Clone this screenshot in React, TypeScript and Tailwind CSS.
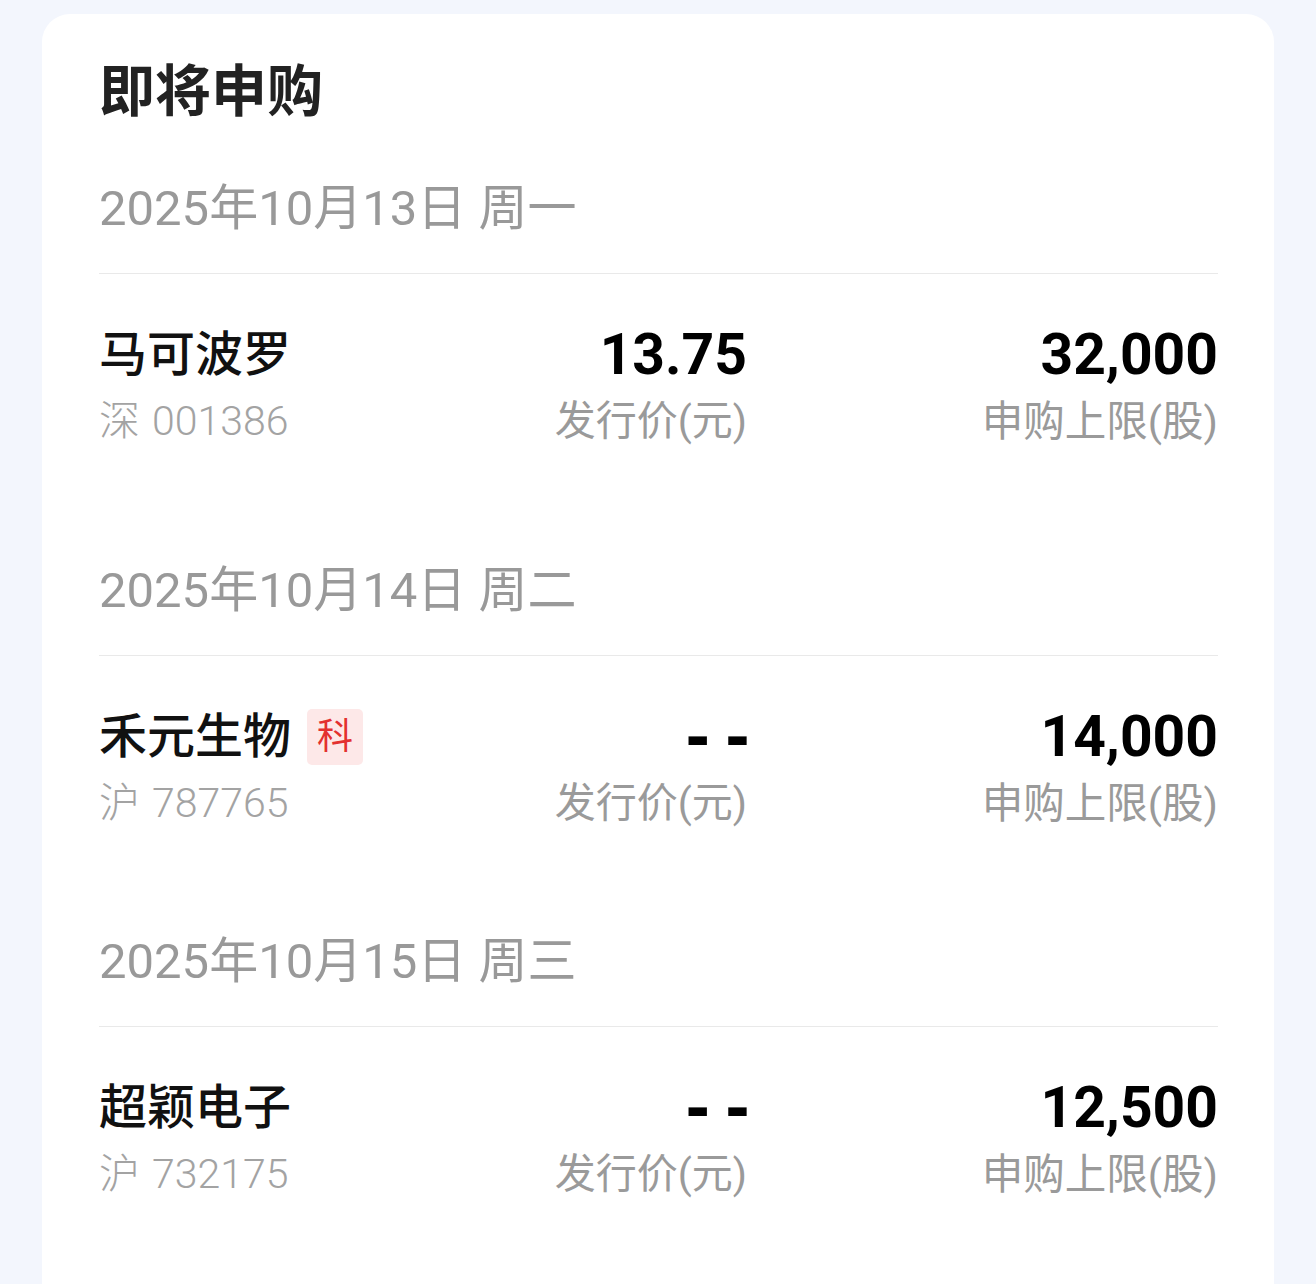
const font = { fontFamily: 'Roboto, "Noto Sans CJK SC", sans-serif' };

type Item = {
  name: string;
  market: string;
  code: string;
  price: string;
  limit: string;
  badge?: string;
};

type Section = { date: string; items: Item[]; gap: string };

const sections: Section[] = [
  {
    date: '2025年10月13日 周一',
    gap: 'pb-[104px]',
    items: [{ name: '马可波罗', market: '深', code: '001386', price: '13.75', limit: '32,000' }],
  },
  {
    date: '2025年10月14日 周二',
    gap: 'pb-[93px]',
    items: [{ name: '禾元生物', market: '沪', code: '787765', price: '- -', limit: '14,000', badge: '科' }],
  },
  {
    date: '2025年10月15日 周三',
    gap: 'pb-[80px]',
    items: [{ name: '超颖电子', market: '沪', code: '732175', price: '- -', limit: '12,500' }],
  },
];

function Value({ v }: { v: string }) {
  if (v === '- -') {
    return (
      <div
        className="h-[64px] text-[60px] leading-[64px] font-bold text-black tracking-[-3px]"
        style={{ fontFamily: '"DejaVu Sans", sans-serif' }}
      >
        {v}
      </div>
    );
  }
  return <div className="h-[64px] text-[57px] leading-[64px] font-bold text-black">{v}</div>;
}

function Row({ item }: { item: Item }) {
  return (
    <div className="grid grid-cols-[1fr_247px_471px] pt-[49px]">
      <div className="flex flex-col">
        <div className="flex items-center h-[64px]">
          <span className="text-[48px] leading-[64px] font-medium text-[#111]">{item.name}</span>
          {item.badge && (
            <span className="ml-[16px] w-[56px] h-[56px] rounded-[5px] bg-[#fde8e8] text-[#e3302f] text-[36px] leading-[56px] text-center">
              {item.badge}
            </span>
          )}
        </div>
        <div className="h-[70px] flex items-center text-[41px] font-light text-[#a3a3a3]">
          <span>{item.market}</span>
          <span className="ml-[12px]">{item.code}</span>
        </div>
      </div>
      <div className="flex flex-col items-end">
        <Value v={item.price} />
        <div className="h-[70px] flex items-center text-[41px] text-[#9a9a9a]">发行价(元)</div>
      </div>
      <div className="flex flex-col items-end">
        <Value v={item.limit} />
        <div className="h-[70px] flex items-center text-[41.5px] text-[#9a9a9a]">申购上限(股)</div>
      </div>
    </div>
  );
}

export default function App() {
  return (
    <div className="min-h-[1284px] bg-[#f3f6fd] pt-[14px] px-[42px]" style={font}>
      <div className="bg-white rounded-t-[28px] min-h-[1270px] pl-[57px] pr-[56px] pt-[47px]">
        <h1 className="text-[56px] leading-[62px] font-bold text-[#222]">即将申购</h1>
        <div className="pt-[56px]">
          {sections.map(s => (
            <div key={s.date} className={s.gap}>
              <div className="text-[49px] leading-[60px] text-[#999] pb-[34px] border-b border-[#e9e9e9]">{s.date}</div>
              {s.items.map(it => (
                <Row key={it.code} item={it} />
              ))}
            </div>
          ))}
        </div>
      </div>
    </div>
  );
}
